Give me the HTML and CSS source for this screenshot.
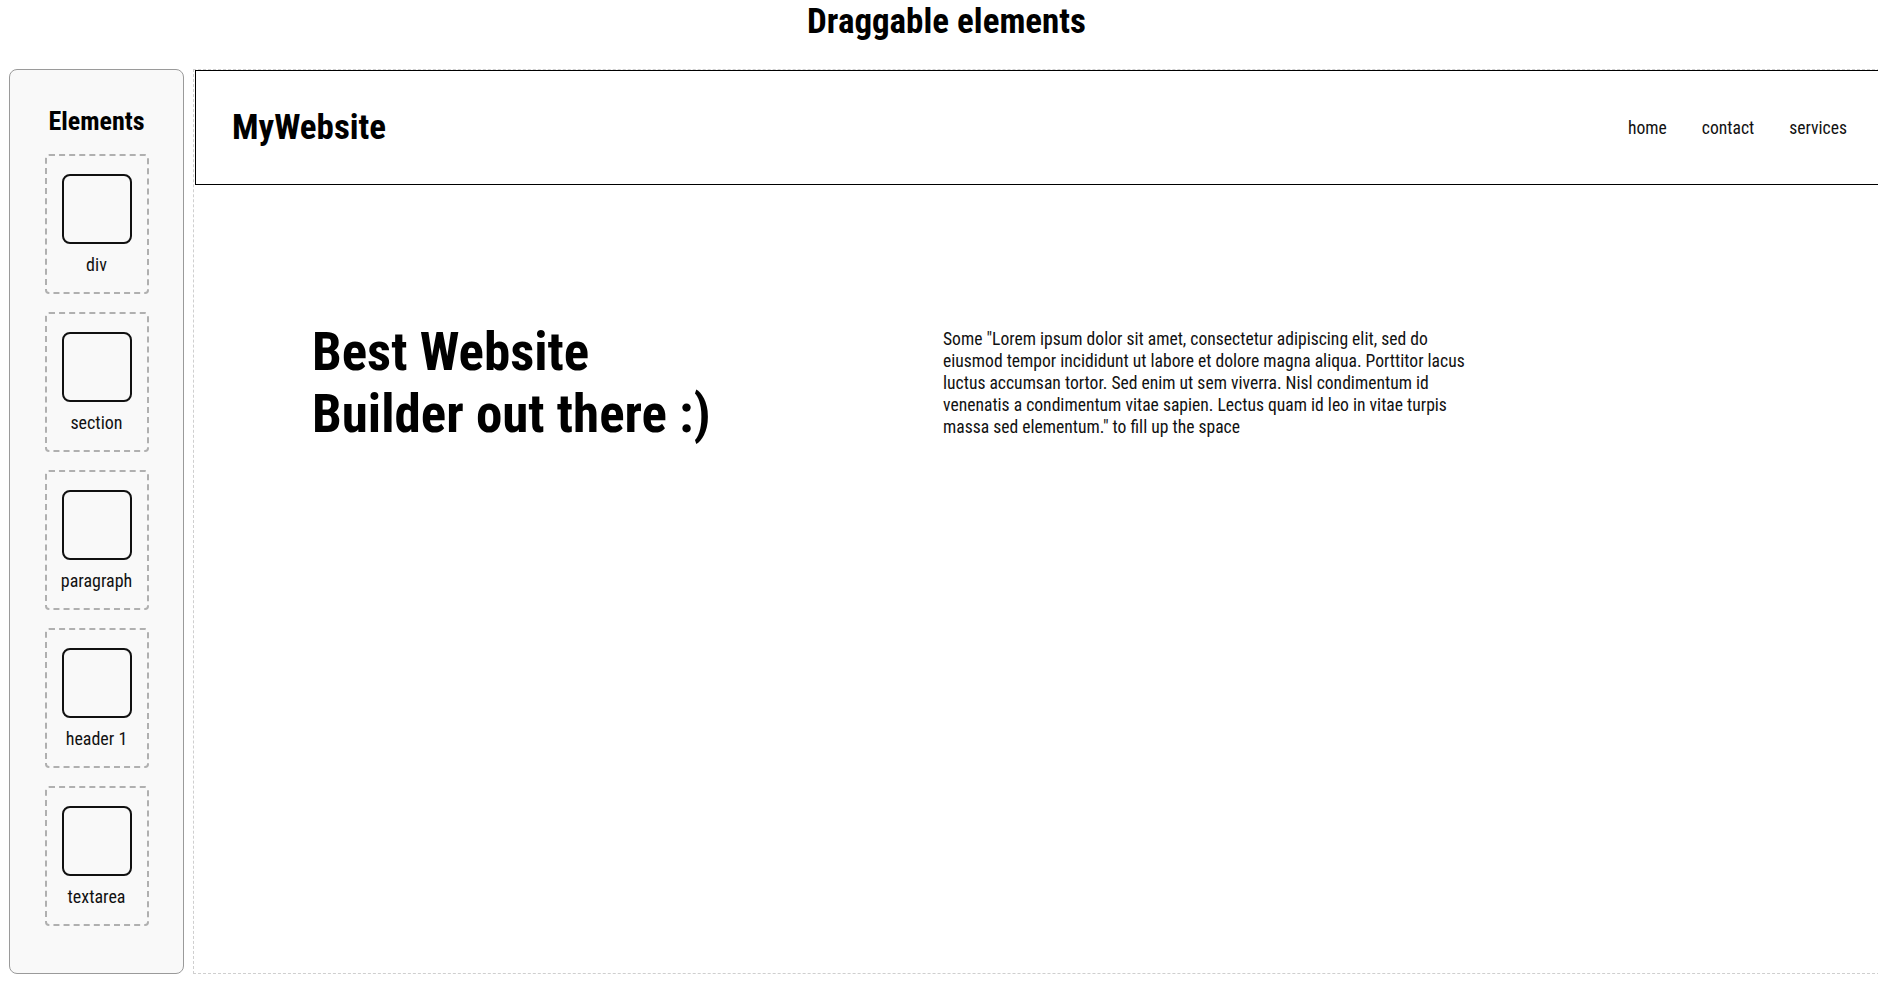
FILE: index.html
```html
<!DOCTYPE html>
<html lang="en">
<head>
<meta charset="utf-8">
<title>Draggable elements</title>
<link rel="stylesheet" href="styles.css">
</head>
<body>
<h1 class="page-title">Draggable elements</h1>
<main class="workspace">
  <aside class="sidebar">
    <h2 class="sidebar-title">Elements</h2>
    <div class="element-list">
      <div class="element-item"><div class="element-icon"></div><span class="element-label">div</span></div>
      <div class="element-item"><div class="element-icon"></div><span class="element-label">section</span></div>
      <div class="element-item"><div class="element-icon"></div><span class="element-label">paragraph</span></div>
      <div class="element-item"><div class="element-icon"></div><span class="element-label">header 1</span></div>
      <div class="element-item"><div class="element-icon"></div><span class="element-label">textarea</span></div>
    </div>
  </aside>
  <section class="canvas">
    <header class="site-header">
      <div class="site-logo">MyWebsite</div>
      <nav class="site-nav">
        <a class="nav-link">home</a>
        <a class="nav-link">contact</a>
        <a class="nav-link">services</a>
      </nav>
    </header>
    <div class="hero">
      <h1 class="hero-title">Best Website<br>Builder out there :)</h1>
      <p class="hero-text">Some "Lorem ipsum dolor sit amet, consectetur adipiscing elit, sed do eiusmod tempor incididunt ut labore et dolore magna aliqua. Porttitor lacus luctus accumsan tortor. Sed enim ut sem viverra. Nisl condimentum id venenatis a condimentum vitae sapien. Lectus quam id leo in vitae turpis massa sed elementum." to fill up the space</p>
    </div>
  </section>
</main>
</body>
</html>
```
FILE: styles.css
```css
html, body {
  margin: 0;
  padding: 0;
  background: #fff;
  overflow: hidden;
}
body {
  font-family: "Roboto Condensed", Roboto, sans-serif;
  color: #000;
}
.page-title {
  margin: 3px 0 0;
  padding-left: 15px;
  height: 66px;
  box-sizing: border-box;
  text-align: center;
  font-size: 35px;
  font-weight: 700;
  line-height: 37px;
}
.workspace {
  display: flex;
  gap: 9px;
  padding-left: 9px;
  height: 905px;
}
.sidebar {
  flex: 0 0 175px;
  box-sizing: border-box;
  background: #f9f9f9;
  border: 1px solid #9a9a9a;
  border-radius: 8px;
  display: flex;
  flex-direction: column;
  align-items: center;
  padding-top: 37px;
}
.sidebar-title {
  margin: 0 0 18px;
  font-size: 26px;
  font-weight: 700;
  line-height: 29px;
}
.element-list {
  display: flex;
  flex-direction: column;
  gap: 18px;
}
.element-item {
  width: 104px;
  height: 140px;
  box-sizing: border-box;
  border: 2px dashed #b0b0b0;
  border-radius: 4px;
  display: flex;
  flex-direction: column;
  align-items: center;
  padding-top: 18px;
}
.element-icon {
  width: 70px;
  height: 70px;
  box-sizing: border-box;
  border: 2px solid #111;
  border-radius: 8px;
  background: #f9f9f9;
  margin-bottom: 10px;
}
.element-label {
  font-size: 18px;
  line-height: 21px;
  color: #111;
}
.canvas {
  flex: 0 0 1692px;
  box-sizing: border-box;
  border: 1px dashed #cfcfcf;
  padding: 0 0 0 1px;
}
.site-header {
  height: 115px;
  box-sizing: border-box;
  border: 1px solid #000;
  display: flex;
  align-items: center;
  justify-content: space-between;
  padding: 0 36px 0 36px;
}
.site-logo {
  font-size: 35px;
  font-weight: 700;
  line-height: 42px;
}
.site-nav {
  display: flex;
  gap: 35px;
}
.nav-link {
  font-size: 17.6px;
  color: #111;
  text-decoration: none;
}
.hero {
  display: flex;
  padding: 136px 0 0 117px;
}
.hero-title {
  margin: 0;
  width: 631px;
  flex: 0 0 631px;
  font-size: 53px;
  font-weight: 700;
  line-height: 62px;
}
.hero-text {
  margin: 7px 0 0;
  width: 530px;
  font-size: 17.6px;
  line-height: 22px;
  color: #111;
}
```
